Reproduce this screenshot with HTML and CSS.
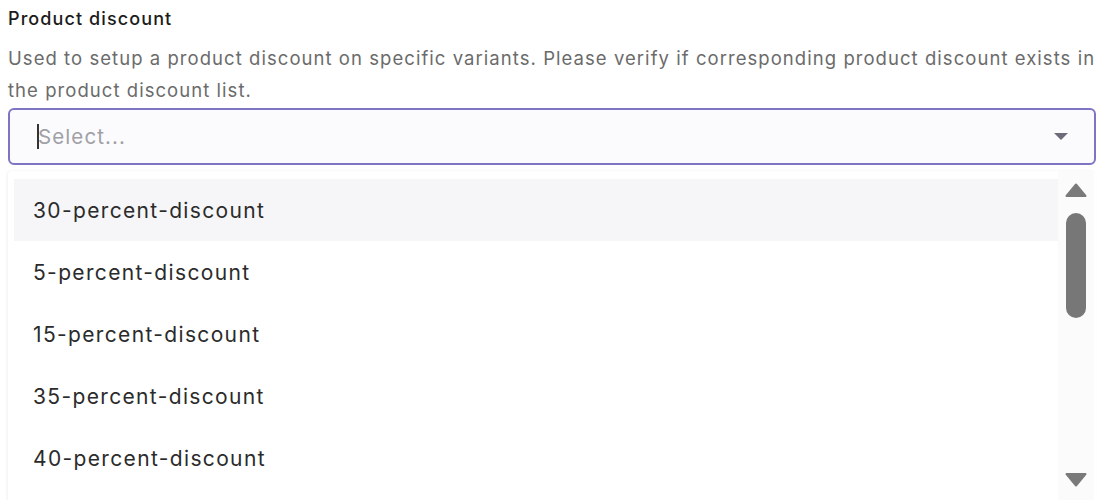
FILE: index.html
```html
<!DOCTYPE html>
<html lang="en">
<head>
    <meta charset="UTF-8">
    <title>Product discount</title>
    <link rel="stylesheet" href="styles.css">
</head>
<body>
    <div class="field">
        <label class="field-label">Product discount</label>
        <p class="field-help">Used to setup a product discount on specific variants. Please verify if corresponding product discount exists in the product discount list.</p>

        <div class="select-box">
            <span class="caret"></span>
            <span class="placeholder">Select...</span>
            <span class="select-arrow"></span>
        </div>

        <div class="menu">
            <ul class="menu-list">
                <li class="menu-item active">30-percent-discount</li>
                <li class="menu-item">5-percent-discount</li>
                <li class="menu-item">15-percent-discount</li>
                <li class="menu-item">35-percent-discount</li>
                <li class="menu-item">40-percent-discount</li>
            </ul>
            <!-- fake scrollbar so it looks the same everywhere -->
            <div class="scrollbar">
                <svg class="scroll-btn" width="22" height="15" viewBox="0 0 22 15">
                    <path d="M11 1.5 L20.5 13 H1.5 Z" fill="#7a7a7a" stroke="#7a7a7a" stroke-width="2" stroke-linejoin="round"/>
                </svg>
                <div class="scroll-thumb"></div>
                <div class="scroll-space"></div>
                <svg class="scroll-btn" width="22" height="15" viewBox="0 0 22 15">
                    <path d="M1.5 2 H20.5 L11 13.5 Z" fill="#7a7a7a" stroke="#7a7a7a" stroke-width="2" stroke-linejoin="round"/>
                </svg>
            </div>
        </div>
    </div>
</body>
</html>
```

FILE: styles.css
```css
* {
    margin: 0;
    padding: 0;
    box-sizing: border-box;
    font-family: 'Inter', 'Noto Sans', sans-serif;
}

html, body {
    height: 100%;
    overflow: hidden;
}

body {
    background-color: #ffffff;
    padding: 5px 4px 0 8px;
}

.field-label {
    display: block;
    font-size: 18px;
    font-weight: 500;
    letter-spacing: 1.1px;
    line-height: 28px;
    color: #1c1c1c;
}

.field-help {
    margin-top: 9px;
    margin-right: -6px;
    font-size: 18.5px;
    letter-spacing: 1.05px;
    line-height: 32px;
    color: #6b6b6b;
}

.select-box {
    margin-top: 2px;
    height: 57px;
    display: flex;
    align-items: center;
    padding: 0 26px 0 27px;
    border: 2px solid #7d74c4;
    border-radius: 6px;
    background-color: #fbfbfd;
}

.caret {
    width: 2px;
    height: 25px;
    background-color: #333;
    margin-right: -1px;
}

.placeholder {
    flex: 1;
    font-size: 20.5px;
    letter-spacing: 1.1px;
    color: #a0a0a6;
}

.select-arrow {
    width: 0;
    height: 0;
    border-left: 7px solid transparent;
    border-right: 7px solid transparent;
    border-top: 7px solid #6e6a7a;
}

.menu {
    margin-top: 6px;
    height: 340px;
    display: flex;
    background-color: #fff;
    border-radius: 4px;
    box-shadow: -1px 0 3px rgba(0, 0, 0, 0.06);
}

.menu-list {
    list-style: none;
    flex: 1;
    padding: 8px 0 0 6px;
}

.menu-item {
    height: 62px;
    display: flex;
    align-items: center;
    padding-left: 19px;
    font-size: 21px;
    letter-spacing: 1.35px;
    color: #2b2b2b;
}

.menu-item.active {
    background-color: #f6f6f8;
}

.scrollbar {
    width: 36px;
    display: flex;
    flex-direction: column;
    align-items: center;
    padding: 12px 0 9px 0;
    margin-right: 2px;
    background-color: #fbfbfb;
}

.scroll-thumb {
    margin-top: 15px;
    width: 20px;
    height: 105px;
    border-radius: 10px;
    background-color: #777;
}

.scroll-space {
    height: 154px;
}
```
